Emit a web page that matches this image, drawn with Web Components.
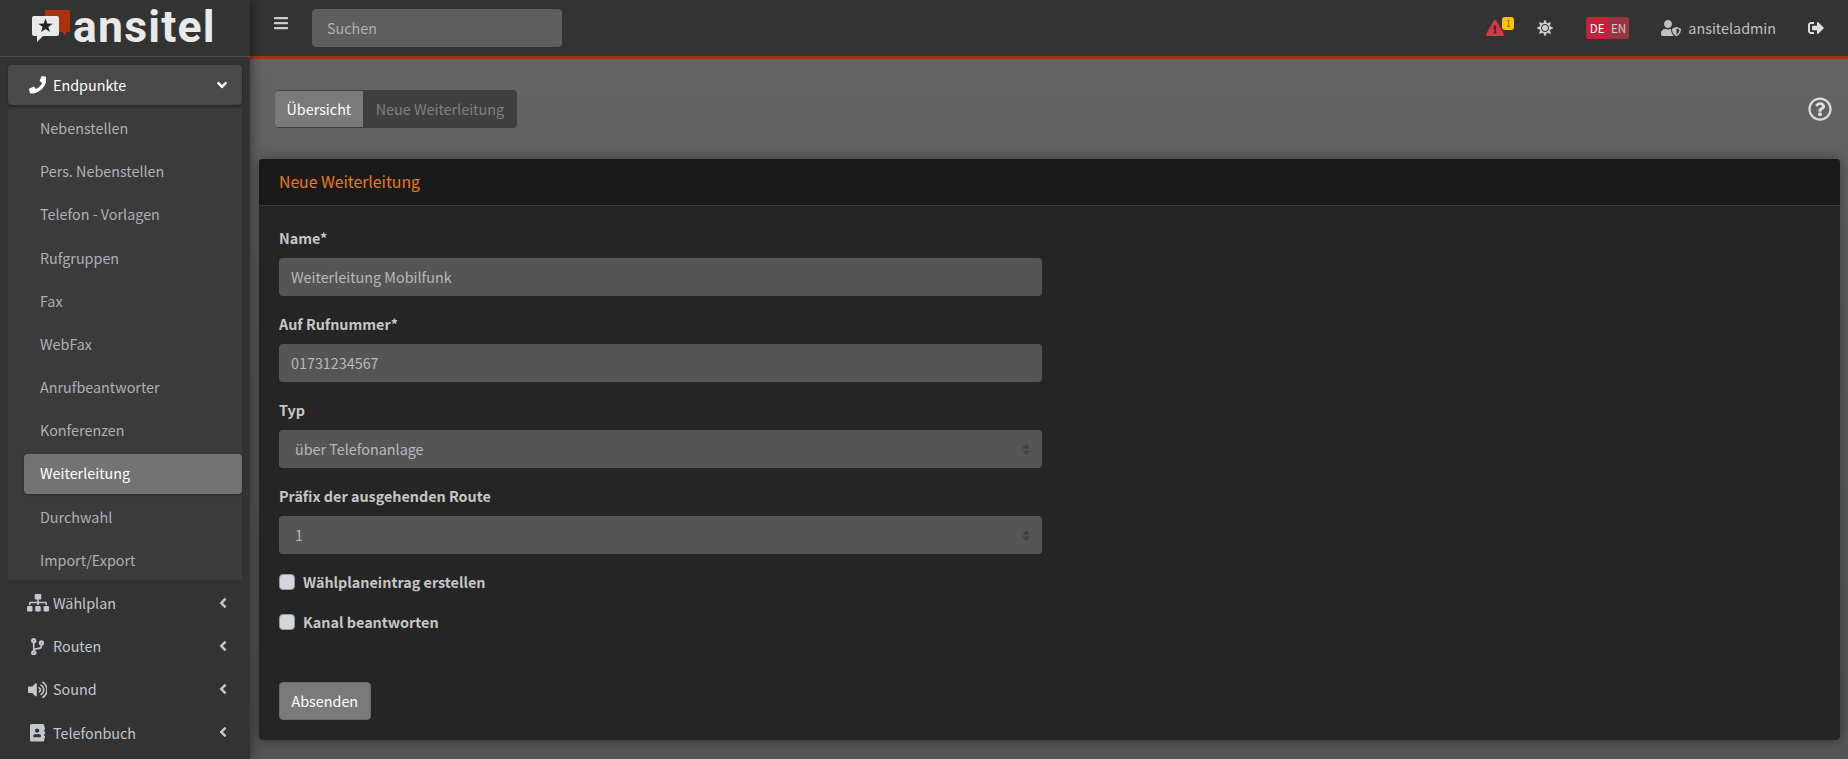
<!DOCTYPE html>
<html lang="de">
<head>
<meta charset="utf-8">
<title>ansitel</title>
<style>
  html, body { margin: 0; height: 100%; background: #333; overflow: hidden; }
  body { font-family: "Noto Sans CJK SC", "Noto Sans", sans-serif; font-size: 14.35px; line-height: 24px; color: #ccc; }
  ans-app { height: 759px; }
</style>
</head>
<body>
<ans-app>
  <ans-sidebar slot="side">
    <ans-nav-item icon="phone" open>Endpunkte</ans-nav-item>
    <ans-sub-menu>
      <ans-sub-item>Nebenstellen</ans-sub-item>
      <ans-sub-item>Pers. Nebenstellen</ans-sub-item>
      <ans-sub-item>Telefon - Vorlagen</ans-sub-item>
      <ans-sub-item>Rufgruppen</ans-sub-item>
      <ans-sub-item>Fax</ans-sub-item>
      <ans-sub-item>WebFax</ans-sub-item>
      <ans-sub-item>Anrufbeantworter</ans-sub-item>
      <ans-sub-item>Konferenzen</ans-sub-item>
      <ans-sub-item active>Weiterleitung</ans-sub-item>
      <ans-sub-item>Durchwahl</ans-sub-item>
      <ans-sub-item>Import/Export</ans-sub-item>
    </ans-sub-menu>
    <ans-nav-item icon="sitemap">Wählplan</ans-nav-item>
    <ans-nav-item icon="branch">Routen</ans-nav-item>
    <ans-nav-item icon="volume">Sound</ans-nav-item>
    <ans-nav-item icon="book">Telefonbuch</ans-nav-item>
  </ans-sidebar>
  <ans-topbar slot="top"></ans-topbar>
  <ans-tabbar>
    <span slot="active">Übersicht</span>
    <span slot="other">Neue Weiterleitung</span>
  </ans-tabbar>
  <ans-card title="Neue Weiterleitung">
    <ans-field label="Name*">Weiterleitung Mobilfunk</ans-field>
    <ans-field label="Auf Rufnummer*">01731234567</ans-field>
    <ans-field label="Typ" select>über Telefonanlage</ans-field>
    <ans-field label="Präfix der ausgehenden Route" select>1</ans-field>
    <ans-check>Wählplaneintrag erstellen</ans-check>
    <ans-check>Kanal beantworten</ans-check>
    <ans-button>Absenden</ans-button>
  </ans-card>
</ans-app>

<script>
//icon paths, all fontawesome 5 shapes: [viewBox width, d]
var ICONS = {
    phone: [512, "M493.4 24.6l-104-24c-11.3-2.6-22.9 3.3-27.5 13.9l-48 112c-4.2 9.8-1.4 21.3 6.9 28l60.6 49.6c-36 76.7-98.9 140.5-177.2 177.2l-49.6-60.6c-6.8-8.3-18.2-11.1-28-6.9l-112 48C3.9 366.5-2 378.1.6 389.4l24 104C27.1 504.2 36.7 512 48 512c256.1 0 464-207.5 464-464 0-11.2-7.7-20.9-18.6-23.4z"],
    sitemap: [640, "M128 352H32c-17.67 0-32 14.33-32 32v96c0 17.67 14.33 32 32 32h96c17.67 0 32-14.33 32-32v-96c0-17.67-14.33-32-32-32zm-24-80h192v48h48v-48h192v48h48v-57.59c0-21.17-17.23-38.41-38.41-38.41H344v-64h40c17.67 0 32-14.33 32-32V32c0-17.67-14.33-32-32-32H256c-17.67 0-32 14.33-32 32v96c0 17.67 14.33 32 32 32h40v64H94.41C73.23 224 56 241.23 56 262.41V320h48v-48zm264 80h-96c-17.67 0-32 14.33-32 32v96c0 17.67 14.33 32 32 32h96c17.67 0 32-14.33 32-32v-96c0-17.67-14.33-32-32-32zm240 0h-96c-17.67 0-32 14.33-32 32v96c0 17.67 14.33 32 32 32h96c17.67 0 32-14.33 32-32v-96c0-17.67-14.33-32-32-32z"],
    branch: [384, "M384 144c0-44.2-35.8-80-80-80s-80 35.8-80 80c0 36.4 24.3 67.1 57.5 76.8-.6 16.1-4.2 28.5-11 36.9-15.4 19.2-49.3 22.4-85.2 25.7-28.2 2.6-57.4 5.4-81.3 16.9v-144c32.5-10.2 56-40.5 56-76.3 0-44.2-35.8-80-80-80S0 35.8 0 80c0 35.8 23.5 66.1 56 76.3v199.3C23.5 365.9 0 396.2 0 432c0 44.2 35.8 80 80 80s80-35.8 80-80c0-34-21.2-63.1-51.2-74.6 3.1-5.2 7.8-9.8 14.9-13.4 16.2-8.2 40.4-10.4 66.1-12.8 42.2-3.9 90-8.4 118.2-43.4 14-17.4 21.1-39.8 21.6-67.9 31.6-10.8 54.4-40.7 54.4-75.9zM80 64c8.8 0 16 7.2 16 16s-7.2 16-16 16-16-7.2-16-16 7.2-16 16-16zm0 384c-8.8 0-16-7.2-16-16s7.2-16 16-16 16 7.2 16 16-7.2 16-16 16zm224-320c8.8 0 16 7.2 16 16s-7.2 16-16 16-16-7.2-16-16 7.2-16 16-16z"],
    volume: [576, "M215.03 71.05L126.06 160H24c-13.26 0-24 10.74-24 24v144c0 13.25 10.74 24 24 24h102.06l88.97 88.95c15.03 15.03 40.97 4.47 40.97-16.97V88.02c0-21.46-25.96-32-40.97-16.97zm233.32-51.08c-11.17-7.33-26.18-4.24-33.51 6.95-7.34 11.17-4.22 26.18 6.95 33.51 66.27 43.49 105.82 116.6 105.82 195.58 0 78.98-39.55 152.09-105.82 195.58-11.17 7.32-14.29 22.34-6.95 33.5 7.04 10.71 21.93 14.56 33.51 6.95C528.27 439.58 576 351.33 576 256S528.27 72.43 448.35 19.97zM480 256c0-63.53-32.06-121.94-85.77-156.24-11.19-7.14-26.03-3.82-33.12 7.46s-3.78 26.21 7.41 33.36C408.27 165.97 432 209.11 432 256s-23.73 90.03-63.48 115.42c-11.19 7.14-14.5 22.07-7.41 33.36 6.51 10.36 21.12 15.14 33.12 7.46C447.94 377.94 480 319.54 480 256zm-141.77-76.87c-11.58-6.33-26.19-2.16-32.61 9.45-6.39 11.61-2.16 26.2 9.45 32.61C327.98 228.28 336 241.63 336 256c0 14.38-8.02 27.72-20.92 34.81-11.61 6.41-15.84 21-9.45 32.61 6.43 11.66 21.05 15.8 32.61 9.45 28.23-15.55 45.77-45 45.77-76.88s-17.54-61.32-45.78-76.86z"],
    book: [448, "M436 160c6.6 0 12-5.4 12-12v-40c0-6.6-5.4-12-12-12h-20V48c0-26.5-21.5-48-48-48H48C21.5 0 0 21.5 0 48v416c0 26.5 21.5 48 48 48h320c26.5 0 48-21.5 48-48v-48h20c6.6 0 12-5.4 12-12v-40c0-6.6-5.4-12-12-12h-20v-64h20c6.6 0 12-5.4 12-12v-40c0-6.6-5.4-12-12-12h-20v-64h20zm-228-32c35.3 0 64 28.7 64 64s-28.7 64-64 64-64-28.7-64-64 28.7-64 64-64zm112 236.8c0 10.6-10 19.2-22.4 19.2H118.4C106 384 96 375.4 96 364.8v-19.2c0-31.8 30.1-57.6 67.2-57.6h5c12.3 5.1 25.7 8 39.8 8s27.6-2.9 39.8-8h5c37.1 0 67.2 25.8 67.2 57.6v19.2z"],
    warn: [576, "M569.517 440.013C587.975 472.007 564.806 512 527.94 512H48.054c-36.937 0-59.999-40.055-41.577-71.987L246.423 24.035c18.467-32.009 64.72-31.951 83.154 0l239.94 416.178zM288 354c-25.405 0-46 20.595-46 46s20.595 46 46 46 46-20.595 46-46-20.595-46-46-46zm-43.673-165.346l7.418 136c.347 6.364 5.609 11.346 11.982 11.346h48.546c6.373 0 11.635-4.982 11.982-11.346l7.418-136c.375-6.874-5.098-12.654-11.982-12.654h-63.383c-6.884 0-12.356 5.78-11.981 12.654z"],
    signout: [512, "M497 273L329 441c-15 15-41 4.5-41-17v-96H152c-13.3 0-24-10.7-24-24v-96c0-13.3 10.7-24 24-24h136V88c0-21.4 25.9-32 41-17l168 168c9.3 9.4 9.3 24.6 0 34zM192 436v-40c0-6.6-5.4-12-12-12H96c-17.7 0-32-14.3-32-32V160c0-17.7 14.3-32 32-32h84c6.6 0 12-5.4 12-12V76c0-6.6-5.4-12-12-12H96c-53 0-96 43-96 96v192c0 53 43 96 96 96h84c6.6 0 12-5.4 12-12z"],
    usershield: [640, "M622.3 271.1l-115.2-45c-4.1-1.6-12.6-3.7-22.2 0l-115.2 45c-10.7 4.2-17.7 14-17.7 24.9 0 111.6 68.7 188.8 132.9 213.9 9.6 3.7 18 1.6 22.2 0C558.4 489.9 640 420.5 640 296c0-10.9-7-20.7-17.7-24.9zM496 462.4V273.3l95.5 37.3c-5.6 87.1-60.9 135.4-95.5 151.8zM224 256c70.7 0 128-57.3 128-128S294.7 0 224 0 96 57.3 96 128s57.3 128 128 128zm96 40c0-2.5.8-4.8 1.1-7.2-2.5-.1-4.9-.8-7.5-.8h-16.7c-22.2 10.2-46.9 16-72.9 16s-50.6-5.8-72.9-16h-16.7C60.2 288 0 348.2 0 422.4V464c0 26.5 21.5 48 48 48h352c6.8 0 13.3-1.5 19.1-4-54-42.9-99.1-115.8-99.1-212z"],
    help: [512, "M256 8C119.043 8 8 119.083 8 256c0 136.997 111.043 248 248 248s248-111.003 248-248C504 119.083 392.957 8 256 8zm0 448c-110.532 0-200-89.431-200-200 0-110.495 89.472-200 200-200 110.491 0 200 89.471 200 200 0 110.53-89.431 200-200 200zm107.244-255.2c0 67.052-72.421 68.084-72.421 92.863V300c0 6.627-5.373 12-12 12h-45.647c-6.627 0-12-5.373-12-12v-8.659c0-35.745 27.1-50.034 47.579-61.516 17.561-9.845 28.324-16.541 28.324-29.579 0-17.246-21.999-28.693-39.784-28.693-23.189 0-33.894 10.977-48.942 29.969-4.057 5.12-11.46 6.071-16.666 2.124l-27.824-21.098c-5.107-3.872-6.251-11.066-2.644-16.363C184.846 131.491 214.94 112 261.794 112c49.071 0 101.45 38.304 101.45 88.8zM298 368c0 23.159-18.841 42-42 42s-42-18.841-42-42 18.841-42 42-42 42 18.841 42 42z"],
    bars: [448, "M16 132h416c8.837 0 16-7.163 16-16V76c0-8.837-7.163-16-16-16H16C7.163 60 0 67.163 0 76v40c0 8.837 7.163 16 16 16zm0 160h416c8.837 0 16-7.163 16-16v-40c0-8.837-7.163-16-16-16H16c-8.837 0-16 7.163-16 16v40c0 8.837 7.163 16 16 16zm0 160h416c8.837 0 16-7.163 16-16v-40c0-8.837-7.163-16-16-16H16c-8.837 0-16 7.163-16 16v40c0 8.837 7.163 16 16 16z"],
    sun: [512, "M256 160c-52.9 0-96 43.1-96 96s43.1 96 96 96 96-43.1 96-96-43.1-96-96-96zm246.4 80.5l-94.7-47.3 33.5-100.4c4.5-13.6-8.4-26.5-21.9-21.9l-100.4 33.5-47.4-94.8c-6.4-12.8-24.6-12.8-31 0l-47.3 94.7L92.7 70.8c-13.6-4.5-26.5 8.4-21.9 21.9l33.5 100.4-94.7 47.4c-12.8 6.4-12.8 24.6 0 31l94.7 47.3-33.5 100.5c-4.5 13.6 8.4 26.5 21.9 21.9l100.4-33.5 47.3 94.7c6.4 12.8 24.6 12.8 31 0l47.3-94.7 100.4 33.5c13.6 4.5 26.5-8.4 21.9-21.9l-33.5-100.4 94.7-47.3c13-6.5 13-24.7.2-31.1zm-155.9 106c-49.9 49.9-131.1 49.9-181 0-49.9-49.9-49.9-131.1 0-181 49.9-49.9 131.1-49.9 181 0 49.9 49.9 49.9 131.1 0 181z"],
    left: [256, "M31.7 239l136-136c9.4-9.4 24.6-9.4 33.9 0l22.6 22.6c9.4 9.4 9.4 24.6 0 33.9L127.9 256l96.4 96.4c9.4 9.4 9.4 24.6 0 33.9L201.7 409c-9.4 9.4-24.6 9.4-33.9 0l-136-136c-9.5-9.4-9.5-24.6-.1-34z"],
    down: [320, "M143 352.3L7 216.3c-9.4-9.4-9.4-24.6 0-33.9l22.6-22.6c9.4-9.4 24.6-9.4 33.9 0l96.4 96.4 96.4-96.4c9.4-9.4 24.6-9.4 33.9 0l22.6 22.6c9.4 9.4 9.4 24.6 0 33.9l-136 136c-9.2 9.4-24.4 9.4-33.8 0z"]
};

function icon(name, height){
    var i = ICONS[name];
    return `<svg viewBox="0 0 ${i[0]} 512" height="${height}" width="${height * i[0] / 512}" fill="currentColor"><path d="${i[1]}"/></svg>`;
}

//page frame: sidebar left, topbar + content right
var template_app = document.createElement("template");
template_app.innerHTML = `
<style>
    :host{ display:grid; grid-template-columns:250px 1fr; grid-template-rows:59px 1fr; }
    .side{ grid-row:1 / 3; display:flex; min-height:0; position:relative; z-index:1; box-shadow:0 0 12px rgba(0,0,0,.5); }
    .top{ display:flex; min-width:0; }
    .main{
        min-width:0; min-height:0;
        background:linear-gradient(#646464, #555);
        padding:31px 8px 0 9px;
    }
</style>
<div class="side"><slot name="side"></slot></div>
<div class="top"><slot name="top"></slot></div>
<div class="main"><slot></slot></div>
`;
class AnsApp extends HTMLElement {
    constructor(){
        super();
        this.attachShadow({mode:"open"}).appendChild(template_app.content.cloneNode(true));
    }
}
customElements.define("ans-app", AnsApp);

var template_sidebar = document.createElement("template");
template_sidebar.innerHTML = `
<style>
    :host{ display:block; width:250px; background:#333; overflow:hidden; }
    .brand{
        height:56px;
        border-bottom:1px solid #4b545c;
        display:flex; align-items:flex-start;
        padding-left:32px; gap:3px;
    }
    .brand svg{ flex:none; margin-top:10px; }
    .word{ font:700 44.500px/54px Roboto, "Noto Sans", sans-serif; color:#e9e9e9; letter-spacing:1.2px; }
    nav{ padding:8px 8px 0; display:flex; flex-direction:column; gap:3.2px; }
</style>
<div class="brand">
    <svg width="38" height="33" viewBox="0 0 38 33">
        <path fill="#a8320e" d="M13 0h24q1 0 1 1v20q0 1-1 1h-3v4l-4-4H13z"/>
        <path fill="#e9e9e9" d="M2 6h23q2 0 2 2v16q0 2-2 2H11l-6 6v-6H2q-2 0-2-2V8q0-2 2-2z"/>
        <path fill="#222" d="M13.5 8.500L15.260 13.570L20.630 13.680L16.350 16.930L17.910 22.070L13.500 19L9.090 22.070L10.650 16.930L6.370 13.680L11.740 13.570z"/>
    </svg>
    <span class="word">ansitel</span>
</div>
<nav><slot></slot></nav>
`;
class AnsSidebar extends HTMLElement {
    constructor(){
        super();
        this.attachShadow({mode:"open"}).appendChild(template_sidebar.content.cloneNode(true));
    }
}
customElements.define("ans-sidebar", AnsSidebar);

var template_navitem = document.createElement("template");
template_navitem.innerHTML = `
<style>
    :host{ display:flex; align-items:center; height:40px; padding:0 15px 0 18px; border-radius:4px; color:#c2c7d0; box-sizing:border-box; }
    :host([open]){ background:#494949; color:#fff; box-shadow:0 1px 3px rgba(0,0,0,.3); }
    .ico{ width:23px; display:flex; justify-content:center; margin-right:4px; }
    .txt{ flex:1; padding-bottom:.5px; }
    .chev{ display:flex; margin-top:-1px; }
</style>
<span class="ico"></span><span class="txt"><slot></slot></span><span class="chev"></span>
`;
class AnsNavItem extends HTMLElement {
    constructor(){
        super();
        this.attachShadow({mode:"open"}).appendChild(template_navitem.content.cloneNode(true));
    }
    connectedCallback(){
        this.shadowRoot.querySelector(".ico").innerHTML = icon(this.getAttribute("icon"), 17.6);
        this.shadowRoot.querySelector(".chev").innerHTML = this.hasAttribute("open") ? icon("down", 16) : icon("left", 16);
    }
}
customElements.define("ans-nav-item", AnsNavItem);

var template_submenu = document.createElement("template");
template_submenu.innerHTML = `
<style>
    :host{ display:flex; flex-direction:column; gap:3.2px; background:#3b3b3b; }
</style>
<slot></slot>
`;
class AnsSubMenu extends HTMLElement {
    constructor(){
        super();
        this.attachShadow({mode:"open"}).appendChild(template_submenu.content.cloneNode(true));
    }
}
customElements.define("ans-sub-menu", AnsSubMenu);

var template_subitem = document.createElement("template");
template_subitem.innerHTML = `
<style>
    :host{ display:flex; align-items:center; height:40px; margin-left:16px; padding:0 0 .5px 16px; box-sizing:border-box; border-radius:4px; color:#adb1b9; }
    :host([active]){ background:#737373; color:#fff; box-shadow:0 1px 3px rgba(0,0,0,.3); }
</style>
<slot></slot>
`;
class AnsSubItem extends HTMLElement {
    constructor(){
        super();
        this.attachShadow({mode:"open"}).appendChild(template_subitem.content.cloneNode(true));
    }
}
customElements.define("ans-sub-item", AnsSubItem);

var template_topbar = document.createElement("template");
template_topbar.innerHTML = `
<style>
    :host{ flex:1; display:flex; align-items:center; height:56px; background:#333; border-bottom:3px solid #a8320e; color:#c0c0c0; }
    .bars{ display:flex; margin-left:24px; margin-top:-10px; color:#ccc; }
    .search{ width:250px; height:38px; margin-left:24px; background:#5e5e5e; border-radius:4px; color:#b0b0b0; display:flex; align-items:center; padding:0 0 1px 15px; box-sizing:border-box; }
    .right{ margin-left:auto; display:flex; align-items:center; padding-right:24px; }
    .warn{ position:relative; display:flex; color:#dc3545; margin-top:-1px; }
    .badge{ position:absolute; left:16px; top:-3px; width:12px; height:13px; border-radius:3px; background:#ffc107; color:#8a6d0a; font-size:9px; line-height:13px; text-align:center; }
    .sun{ display:flex; margin-left:33px; color:#ccc; }
    .lang{ display:flex; margin-left:33px; height:22px; border-radius:3px; overflow:hidden; font-size:11.500px; line-height:22px; }
    .lang span{ width:21.500px; text-align:center; color:#fff; background:#c8203c; }
    .lang span + span{ background:#9b3343; color:#ccc; }
    .user{ display:flex; align-items:center; margin-left:32px; }
    .user svg{ margin-right:7px; }
    .out{ display:flex; margin-left:32px; color:#ddd; }
</style>
<span class="bars"></span>
<div class="search">Suchen</div>
<div class="right">
    <span class="warn"><span class="badge">1</span></span>
    <span class="sun"></span>
    <div class="lang"><span>DE</span><span>EN</span></div>
    <div class="user">ansiteladmin</div>
    <span class="out"></span>
</div>
`;
class AnsTopbar extends HTMLElement {
    constructor(){
        super();
        var root = this.attachShadow({mode:"open"});
        root.appendChild(template_topbar.content.cloneNode(true));
        root.querySelector(".bars").innerHTML = icon("bars", 16);
        root.querySelector(".warn").insertAdjacentHTML("afterbegin", icon("warn", 16));
        root.querySelector(".sun").innerHTML = icon("sun", 16);
        root.querySelector(".user").insertAdjacentHTML("afterbegin", icon("usershield", 16));
        root.querySelector(".out").innerHTML = icon("signout", 16);
    }
}
customElements.define("ans-topbar", AnsTopbar);

var template_tabbar = document.createElement("template");
template_tabbar.innerHTML = `
<style>
    :host{ display:flex; align-items:center; justify-content:space-between; height:38px; padding:0 8px 0 16px; margin-bottom:31px; }
    .tabs{ display:flex; height:38px; border-radius:4px; overflow:hidden; line-height:36px; background:#3f3f3f; }
    .a{ background:#7a7a7a; color:#fff; padding:0 11.500px; margin:1px 0; border-radius:3px 0 0 3px; }
    .b{ color:#808080; padding:1px 13px 0; }
    .help{ display:flex; color:#ddd; }
</style>
<div class="tabs"><div class="a"><slot name="active"></slot></div><div class="b"><slot name="other"></slot></div></div>
<span class="help"></span>
`;
class AnsTabbar extends HTMLElement {
    constructor(){
        super();
        var root = this.attachShadow({mode:"open"});
        root.appendChild(template_tabbar.content.cloneNode(true));
        root.querySelector(".help").innerHTML = icon("help", 24);
    }
}
customElements.define("ans-tabbar", AnsTabbar);

var template_card = document.createElement("template");
template_card.innerHTML = `
<style>
    :host{ display:block; background:#252525; border-radius:4px; box-shadow:0 0 14px rgba(0,0,0,.4); overflow:hidden; }
    header{ height:46px; background:#1a1a1a; border-bottom:1px solid #3a3a3a; color:#f07a0f; padding:0 20px; line-height:46px; font-size:15.750px; }
    .body{ padding:20px; display:flex; flex-direction:column; align-items:flex-start; }
</style>
<header></header>
<div class="body"><slot></slot></div>
`;
class AnsCard extends HTMLElement {
    constructor(){
        super();
        this.attachShadow({mode:"open"}).appendChild(template_card.content.cloneNode(true));
    }
    connectedCallback(){
        this.shadowRoot.querySelector("header").innerText = this.getAttribute("title");
        this.removeAttribute("title");
    }
}
customElements.define("ans-card", AnsCard);

var template_field = document.createElement("template");
template_field.innerHTML = `
<style>
    :host{ display:block; width:763px; margin-bottom:16px; }
    label{ display:block; font-weight:700; color:#c6c6c6; margin-bottom:8px; }
    .box{ height:38px; border-radius:4px; background:#555; color:#b5b9c0; display:flex; align-items:center; justify-content:space-between; padding:0 12px; box-sizing:border-box; }
    :host([select]) .box{ padding-left:16px; }
    svg{ display:none; }
    :host([select]) svg{ display:block; }
</style>
<label></label>
<div class="box">
    <span><slot></slot></span>
    <svg width="8" height="11" viewBox="0 0 8 11" fill="#3d4148"><path d="M4 0l4 4.500H0zM4 11L0 6.500h8z"/></svg>
</div>
`;
class AnsField extends HTMLElement {
    constructor(){
        super();
        this.attachShadow({mode:"open"}).appendChild(template_field.content.cloneNode(true));
    }
    connectedCallback(){
        this.shadowRoot.querySelector("label").innerText = this.getAttribute("label");
    }
}
customElements.define("ans-field", AnsField);

var template_check = document.createElement("template");
template_check.innerHTML = `
<style>
    :host{ display:flex; align-items:center; height:24px; margin-bottom:16px; font-weight:700; color:#c6c6c6; }
    .b{ width:16px; height:16px; border-radius:4px; background:#d4d8de; border:1px solid #999; box-sizing:border-box; margin-right:8px; }
</style>
<span class="b"></span><slot></slot>
`;
class AnsCheck extends HTMLElement {
    constructor(){
        super();
        this.attachShadow({mode:"open"}).appendChild(template_check.content.cloneNode(true));
    }
}
customElements.define("ans-check", AnsCheck);

var template_button = document.createElement("template");
template_button.innerHTML = `
<style>
    :host{ display:block; margin-top:32px; height:38px; line-height:36px; padding:0 11.500px; background:#7a7a7a; border:1px solid #6c6c6c; border-radius:4px; color:#fff; box-sizing:border-box; }
</style>
<slot></slot>
`;
class AnsButton extends HTMLElement {
    constructor(){
        super();
        this.attachShadow({mode:"open"}).appendChild(template_button.content.cloneNode(true));
    }
}
customElements.define("ans-button", AnsButton);
</script>
</body>
</html>
